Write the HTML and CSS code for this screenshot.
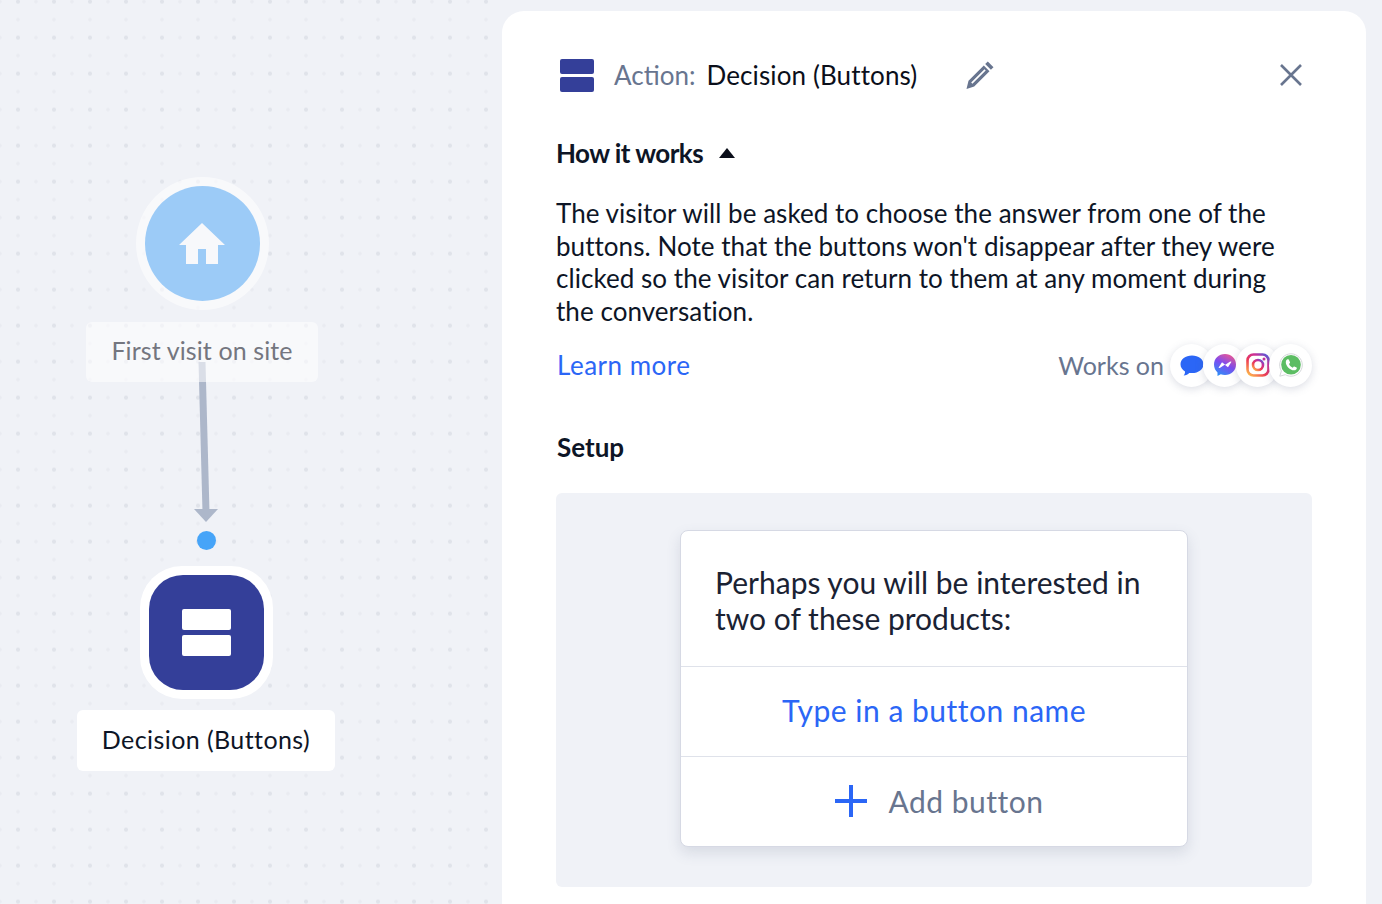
FILE: index.html
```html
<!DOCTYPE html>
<html lang="en">
<head>
<meta charset="utf-8">
<title>Decision (Buttons)</title>
<link rel="stylesheet" href="styles.css">
</head>
<body>
<main class="app">
  <section class="canvas">
    <svg class="edge" viewBox="0 0 30 170">
      <path class="edge-line" d="M11 0 15 150" />
      <path class="edge-head" d="M3 147H27L15 160Z"/>
    </svg>
    <div class="node node-start">
      <div class="start-ring">
        <div class="start-disc">
          <svg class="home" viewBox="0 0 46 42"><path d="M23 0 46 22H39V41H27V26H19V41H7V22H0Z"/></svg>
        </div>
      </div>
      <div class="node-label">First visit on site</div>
    </div>
    <div class="port"></div>
    <div class="node node-decision">
      <div class="decision-ring">
        <div class="decision-tile">
          <span class="tile-bar"></span>
          <span class="tile-bar"></span>
        </div>
      </div>
      <div class="node-label node-label-active">Decision (Buttons)</div>
    </div>
  </section>

  <section class="panel">
    <header class="panel-head">
      <div class="head-icon"><span></span><span></span></div>
      <span class="head-key">Action:</span>
      <span class="head-value">Decision (Buttons)</span>
      <svg class="pencil" viewBox="0 0 28 28"><path d="M21.800 0.500 27.500 6.200 24.900 8.800 19.200 3.100ZM17.800 4.500 23.500 10.200 8.200 25.600 0.500 28 2.500 19.800ZM18.500 8.300 5.200 21.600 6.400 22.800 19.700 9.500Z" fill-rule="evenodd"/></svg>
      <svg class="close" viewBox="0 0 22 22"><path d="M1 1 21 21M21 1 1 21"/></svg>
    </header>

    <h2 class="how">How it works <span class="caret"></span></h2>
    <p class="desc">The visitor will be asked to choose the answer from one of the buttons. Note that the buttons won't disappear after they were clicked so the visitor can return to them at any moment during the conversation.</p>

    <div class="meta">
      <a class="learn" href="#">Learn more</a>
      <div class="works">
        <span class="works-label">Works on</span>
        <div class="channels">
          <span class="channel">
            <svg viewBox="0 0 24 24"><path fill="#2b66f6" d="M12 2.500C18.600 2.500 23.500 6.200 23.500 11.200 23.500 16.200 18.600 20 12 20H9.200C8 21.500 6 22.400 3.600 22.600 4.600 21.500 5.100 20 5 18.400 2.200 16.800.5 14.200.5 11.200.5 6.200 5.400 2.500 12 2.500Z"/></svg>
          </span>
          <span class="channel">
            <svg viewBox="0 0 24 24">
              <defs><linearGradient id="ms" x1="0.3" y1="1" x2="0.8" y2="0"><stop offset="0" stop-color="#2f8df6"/><stop offset="0.5" stop-color="#7d4cf0"/><stop offset="1" stop-color="#f2588e"/></linearGradient></defs>
              <path fill="url(#ms)" d="M12 1C5.800 1 1 5.500 1 11.600 1 14.800 2.300 17.500 4.500 19.400V23L7.800 21.200C9.100 21.700 10.500 22 12 22 18.200 22 23 17.500 23 11.500 23 5.500 18.200 1 12 1Z"/>
              <path fill="#fff" d="M5.500 14.800 9 9.200 12.300 11.800 17.200 8.500 18.500 8.800 15 14.300 11.700 11.800 6.800 15.100Z"/>
            </svg>
          </span>
          <span class="channel">
            <svg viewBox="0 0 24 24">
              <defs><linearGradient id="ig" x1="0.1" y1="1" x2="0.9" y2="0"><stop offset="0" stop-color="#fdb44b"/><stop offset="0.4" stop-color="#ee3a55"/><stop offset="0.75" stop-color="#c72f9b"/><stop offset="1" stop-color="#5a58d6"/></linearGradient></defs>
              <rect x="1.500" y="1.500" width="21" height="21" rx="6" fill="none" stroke="url(#ig)" stroke-width="2.600"/>
              <circle cx="12" cy="12" r="5" fill="none" stroke="url(#ig)" stroke-width="2.600"/>
              <circle cx="18" cy="6" r="1.500" fill="#c72f9b"/>
            </svg>
          </span>
          <span class="channel">
            <svg viewBox="0 0 24 24">
              <path fill="#fff" stroke="#d5d7da" stroke-width="1" d="M12 .8C5.700.8.700 5.800.700 12 .700 14.200 1.300 16.200 2.400 17.900L.8 23.200 6.300 21.700C8 22.700 9.900 23.200 12 23.200 18.200 23.200 23.300 18.200 23.300 12 23.300 5.800 18.200.8 12 .8Z"/>
              <circle cx="12" cy="11.800" r="9.800" fill="#5cbd63"/>
              <path fill="#fff" d="M8.600 6.300C8 6.300 6.800 7.300 6.800 9.200 6.800 12.800 11 17.300 15 17.300 16.800 17.300 17.800 16 17.800 15.200 17.800 14.900 17.700 14.700 17.500 14.600L15.300 13.500C15 13.400 14.800 13.500 14.600 13.700L13.800 14.700C12.100 14 10.700 12.600 10 11L10.900 10C11.100 9.800 11.100 9.500 11 9.300L10 6.900C9.800 6.500 9.500 6.300 8.600 6.300Z"/>
            </svg>
          </span>
        </div>
      </div>
    </div>

    <h2 class="setup">Setup</h2>
    <div class="setup-box">
      <div class="card">
        <div class="card-msg">Perhaps you will be interested in two of these products:</div>
        <div class="card-btn">Type in a button name</div>
        <div class="card-add">
          <svg class="plus" viewBox="0 0 32 32"><path d="M16 0V32M0 16H32"/></svg>
          <span>Add button</span>
        </div>
      </div>
    </div>
  </section>
</main>
</body>
</html>
```
FILE: styles.css
```css
* { box-sizing: border-box; }
html, body { margin: 0; height: 100%; }
body {
  font-family: "Lato", "Noto Sans", sans-serif;
  color: #0d1526;
  background: #f0f2f7;
  overflow: hidden;
}
.app { display: flex; width: 1382px; height: 904px; overflow: hidden; }

/* Canvas */
.canvas {
  position: relative;
  flex: 0 0 502px;
  height: 904px;
  background-color: #f0f2f7;
  background-image:
    radial-gradient(circle, #e0e3ea 1.6px, transparent 2.4px),
    radial-gradient(circle, #e9ebf1 1.4px, transparent 2.2px),
    radial-gradient(circle, #e9ebf1 1.4px, transparent 2.2px);
  background-size: 36px 36px, 36px 36px, 36px 36px;
  background-position: 0 -16.4px, -18px -16.4px, 0 1.6px;
}
.node { position: absolute; display: flex; flex-direction: column; align-items: center; }
.node-start { left: 86px; top: 177px; width: 232px; }
.start-ring {
  width: 133px; height: 133px; padding: 9px;
  border-radius: 50%;
  background: rgba(255,255,255,.55);
}
.start-disc {
  width: 115px; height: 115px; border-radius: 50%;
  background: #9ccbf7;
  display: flex; align-items: center; justify-content: center;
}
.home { width: 46px; height: 42px; fill: #f7f8fb; }
.node-label {
  margin-top: 12px;
  width: 100%;
  height: 60px;
  border-radius: 6px;
  background: rgba(255,255,255,.55);
  color: #74767f;
  font-size: 25px;
  letter-spacing: .1px;
  line-height: 57px;
  text-align: center;
  white-space: nowrap;
}
.edge { position: absolute; left: 191px; top: 362px; width: 30px; height: 170px; overflow: visible; }
.edge-line { fill: none; stroke: #adb7ca; stroke-width: 7; }
.edge-head { fill: #adb7ca; }
.port {
  position: absolute; left: 197px; top: 531px;
  width: 19px; height: 19px; border-radius: 50%;
  background: #46a4f8;
}
.node-decision { left: 77px; top: 566px; width: 258px; }
.decision-ring { width: 133px; height: 133px; padding: 9px; border-radius: 42px; background: #fff; }
.decision-tile {
  width: 115px; height: 115px; border-radius: 34px;
  background: #343f99;
  display: flex; flex-direction: column; align-items: center; justify-content: center; gap: 5px;
}
.tile-bar { width: 49px; height: 21px; border-radius: 2px; background: #fff; }
.node-label-active { margin-top: 11px; height: 61px; line-height: 59px; background: #fff; color: #0d1526; letter-spacing: .42px; }

/* Panel */
.panel {
  flex: 0 0 864px;
  height: 960px;
  margin-top: 11px;
  padding: 0 54px;
  background: #fff;
  border-radius: 22px;
}
.panel-head { display: flex; align-items: center; height: 128px; padding-left: 4px; }
.head-icon { width: 34px; display: flex; flex-direction: column; gap: 3px; margin-right: 20px; }
.head-icon span { height: 15px; border-radius: 2px; background: #343f99; }
.head-key { color: #68758f; font-size: 26px; margin-right: 11px; }
.head-value { color: #0b0f1a; font-size: 26px; letter-spacing: .12px; }
.pencil { width: 28px; height: 28px; fill: #68758f; margin-left: 49px; }
.close { width: 22px; height: 22px; margin-left: auto; margin-right: 10px; stroke: #68758f; stroke-width: 2.6; fill: none; }

.how { margin: -2px 0 0; font-size: 26px; line-height: 32px; font-weight: 700; letter-spacing: -.55px; display: flex; align-items: center; gap: 16px; height: 32px; }
.caret { width: 0; height: 0; border-left: 8.5px solid transparent; border-right: 8.5px solid transparent; border-bottom: 10px solid #0b0f1a; }
.desc { margin: 28px 0 0; max-width: 730px; font-size: 26px; letter-spacing: .05px; line-height: 32.5px; color: #0d1526; }
.meta { display: flex; justify-content: space-between; align-items: center; margin-top: 12px; height: 52px; }
.learn { color: #2b66f6; font-size: 26px; letter-spacing: .5px; text-decoration: none; padding-left: 1px; }
.works { display: flex; align-items: center; }
.works-label { color: #68758f; font-size: 25px; margin-right: 6px; }
.channels { display: flex; }
.channel {
  width: 43px; height: 43px; border-radius: 50%;
  background: #fff;
  box-shadow: 0 2px 8px rgba(90,100,130,.22);
  display: flex; align-items: center; justify-content: center;
  margin-left: -10px;
}
.channel:first-child { margin-left: 0; }
.channel svg { width: 24px; height: 24px; }
.setup { margin: 40px 0 0; padding-left: 1px; font-size: 26px; line-height: 32px; font-weight: 700; }
.setup-box {
  margin-top: 30px;
  height: 394px;
  padding: 37px 124px 0;
  background: #f0f2f7;
  border-radius: 6px;
}
.card {
  height: 317px;
  background: #fff;
  border: 1px solid #d6d9e4;
  border-radius: 8px;
  box-shadow: 0 6px 14px rgba(90,100,130,.16);
}
.card-msg { height: 136px; padding: 33px 34px 0; font-size: 30px; line-height: 36px; color: #1a2233; border-bottom: 1px solid #dfe2ea; }
.card-btn { height: 90px; line-height: 86px; font-size: 30px; letter-spacing: .5px; text-align: center; color: #2b66f6; border-bottom: 1px solid #dfe2ea; }
.card-add { height: 89px; padding: 0 0 2px 10px; display: flex; align-items: center; justify-content: center; gap: 22px; font-size: 30px; letter-spacing: .5px; color: #68758f; }
.plus { width: 32px; height: 32px; stroke: #2b66f6; stroke-width: 4; fill: none; }
```
